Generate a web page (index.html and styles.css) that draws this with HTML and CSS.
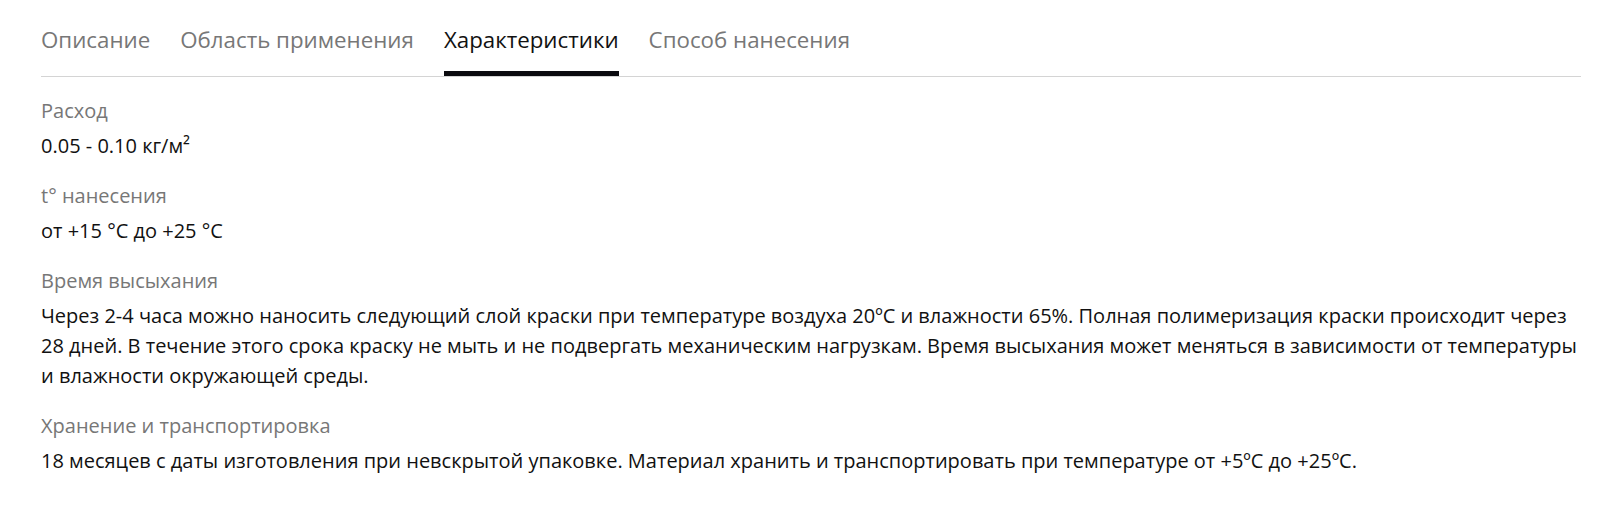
FILE: index.html
```html
<!DOCTYPE html>
<html lang="ru">
<head>
    <meta charset="UTF-8">
    <title>Характеристики</title>
    <link rel="stylesheet" href="styles.css">
</head>
<body>
    <div class="product-info">
        <div class="tabs">
            <a class="tab">Описание</a>
            <a class="tab">Область применения</a>
            <a class="tab active">Характеристики</a>
            <a class="tab">Способ нанесения</a>
        </div>

        <div class="props">
            <div class="prop">
                <div class="prop-name">Расход</div>
                <div class="prop-value">0.05 - 0.10 кг/м²</div>
            </div>
            <div class="prop">
                <div class="prop-name">t° нанесения</div>
                <div class="prop-value">от +15 °C до +25 °C</div>
            </div>
            <div class="prop">
                <div class="prop-name">Время высыхания</div>
                <div class="prop-value">Через 2-4 часа можно наносить следующий слой краски при температуре воздуха 20ºC и влажности 65%. Полная полимеризация краски происходит через 28 дней. В течение этого срока краску не мыть и не подвергать механическим нагрузкам. Время высыхания может меняться в зависимости от температуры и влажности окружающей среды.</div>
            </div>
            <div class="prop">
                <div class="prop-name">Хранение и транспортировка</div>
                <div class="prop-value">18 месяцев с даты изготовления при невскрытой упаковке. Материал хранить и транспортировать при температуре от +5ºC до +25ºC.</div>
            </div>
        </div>
    </div>
</body>
</html>
```

FILE: styles.css
```css
body {
    margin: 0;
    padding: 0;
    background: #fff;
    font-family: "Open Sans", Arial, sans-serif;
    color: #111;
}
.product-info {
    padding: 0 29px 0 41px;
}
.tabs {
    display: flex;
    gap: 30px;
    padding-top: 25px;
    border-bottom: 1px solid #d4d4d4;
}
.tab {
    position: relative;
    padding-bottom: 21px;
    font-size: 22.3px;
    line-height: 30px;
    color: #777;
    cursor: pointer;
}
.tab.active {
    color: #111;
}
.tab.active::after {
    content: "";
    position: absolute;
    left: 0;
    right: 0;
    bottom: 0;
    height: 5px;
    background: #0a0a0f;
}
.props {
    padding-top: 19px;
}
.prop {
    margin-bottom: 20px;
}
.prop-name {
    font-size: 20px;
    line-height: 30px;
    color: #777;
    margin-bottom: 5px;
}
.prop-value {
    font-size: 20px;
    line-height: 30px;
}
```
